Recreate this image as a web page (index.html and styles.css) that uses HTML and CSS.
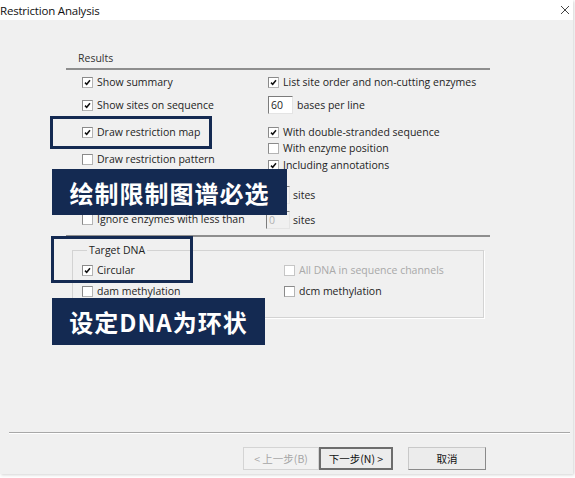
FILE: index.html
```html
<!DOCTYPE html>
<html lang="en">
<head>
    <meta charset="UTF-8">
    <meta name="viewport" content="width=device-width, initial-scale=1.0">
    <title>Restriction Analysis</title>
    <link rel="stylesheet" href="styles.css">
</head>
<body>
    <div class="window">
        <div class="titlebar">
            <span class="title">Restriction Analysis</span>
            <svg class="close" width="10" height="10" viewBox="0 0 10 10"><path d="M1 1 L9 9 M9 1 L1 9"/></svg>
        </div>

        <div class="content">
            <div class="results">
                <div class="section-head">Results</div>
                <div class="cols">
                    <div class="col col-left">
                        <label class="opt l1"><span class="cb on"><svg viewBox="0 0 9 9"><path d="M2 4.6 L3.7 6.3 L7 2.2"/></svg></span>Show summary</label>
                        <label class="opt l2"><span class="cb on"><svg viewBox="0 0 9 9"><path d="M2 4.6 L3.7 6.3 L7 2.2"/></svg></span>Show sites on sequence</label>
                        <label class="opt l3"><span class="cb on"><svg viewBox="0 0 9 9"><path d="M2 4.6 L3.7 6.3 L7 2.2"/></svg></span>Draw restriction map</label>
                        <label class="opt l4"><span class="cb"></span>Draw restriction pattern</label>
                        <div class="opt l5"><span class="cb"></span></div>
                        <label class="opt l6"><span class="cb"></span>Ignore enzymes with less than</label>
                    </div>
                    <div class="col col-right">
                        <label class="opt r1"><span class="cb on"><svg viewBox="0 0 9 9"><path d="M2 4.6 L3.7 6.3 L7 2.2"/></svg></span>List site order and non-cutting enzymes</label>
                        <div class="opt r2"><span class="num">60</span>bases per line</div>
                        <label class="opt r3"><span class="cb on"><svg viewBox="0 0 9 9"><path d="M2 4.6 L3.7 6.3 L7 2.2"/></svg></span>With double-stranded sequence</label>
                        <label class="opt r4"><span class="cb"></span>With enzyme position</label>
                        <label class="opt r5"><span class="cb on"><svg viewBox="0 0 9 9"><path d="M2 4.6 L3.7 6.3 L7 2.2"/></svg></span>Including annotations</label>
                        <div class="opt r6"><span class="num off">0</span>sites</div>
                        <div class="opt r7"><span class="num off">0</span>sites</div>
                    </div>
                </div>
            </div>

            <div class="rule"></div>

            <fieldset class="target">
                <legend>Target DNA</legend>
                <div class="target-grid">
                    <label class="opt"><span class="cb on"><svg viewBox="0 0 9 9"><path d="M2 4.6 L3.7 6.3 L7 2.2"/></svg></span>Circular</label>
                    <label class="opt disabled"><span class="cb"></span>All DNA in sequence channels</label>
                    <label class="opt"><span class="cb"></span>dam methylation</label>
                    <label class="opt"><span class="cb"></span>dcm methylation</label>
                </div>
            </fieldset>
        </div>

        <div class="footer">
            <div class="footer-sep"></div>
            <div class="buttons">
                <button class="btn btn-prev" disabled>&lt; 上一步(B)</button>
                <button class="btn btn-next">下一步(N) &gt;</button>
                <button class="btn btn-cancel">取消</button>
            </div>
        </div>

        <!-- annotation overlays -->
        <div class="mark mark-map"></div>
        <div class="label label-map">绘制限制图谱必选</div>
        <div class="mark mark-dna"></div>
        <div class="label label-dna">设定DNA为环状</div>
    </div>
</body>
</html>
```

FILE: styles.css
```css
* {
    margin: 0;
    padding: 0;
    box-sizing: border-box;
}

body {
    width: 575px;
    height: 478px;
    background: #fff;
    font-family: 'Open Sans', 'Noto Sans CJK SC', sans-serif;
    font-size: 10.5px;
    color: #1e1e1e;
    overflow: hidden;
}

.window {
    position: relative;
    width: 573px;
    height: 474px;
    background: #f0f0f0;
    display: flex;
    flex-direction: column;
    box-shadow: 1px 1px 3px rgba(0, 0, 0, 0.18);
}

.titlebar {
    height: 20px;
    background: #fff;
    display: flex;
    align-items: center;
    justify-content: space-between;
    padding-right: 3px;
}

.title {
    font-family: 'Open Sans', sans-serif;
    font-size: 11.5px;
    color: #111;
    letter-spacing: -0.2px;
}

.close path {
    stroke: #444;
    stroke-width: 1;
    fill: none;
}

.content {
    flex: 1;
    padding: 30px 0 0 66px;
}

.results {
    width: 424px;
}

.section-head {
    line-height: 16px;
    padding: 0 0 2px 12px;
    border-bottom: 2px solid #8e8e8e;
    color: #333;
}

.cols {
    display: flex;
    padding-left: 16px;
}

.col {
    display: flex;
    flex-direction: column;
    padding-top: 4px;
}

.col-left {
    width: 186px;
}

.opt {
    display: flex;
    align-items: center;
    height: 16px;
    white-space: nowrap;
}

.l2 { margin-top: 7px; }
.l3 { margin-top: 11px; }
.l4 { margin-top: 11px; }
.l5 { margin-top: 14px; }
.l6 { margin-top: 14px; }

.r2 { margin-top: 6px; height: 18px; }
.r3 { margin-top: 10px; }
.r4 { margin-top: 0; }
.r5 { margin-top: 1px; }
.r6 { margin-top: 13px; height: 18px; margin-left: -2px; }
.r7 { margin-top: 7px; height: 18px; margin-left: -2px; }

.cb {
    width: 11px;
    height: 11px;
    margin-right: 4px;
    border: 1px solid #8a8a8a;
    border-right-color: #b4b4b4;
    border-bottom-color: #b4b4b4;
    background: #fff;
    display: inline-flex;
    flex-shrink: 0;
}

.cb svg {
    width: 9px;
    height: 9px;
}

.cb svg path {
    stroke: #111;
    stroke-width: 1.5;
    fill: none;
}

.num {
    width: 25px;
    height: 18px;
    margin-right: 4px;
    padding-left: 2px;
    line-height: 16px;
    border: 1px solid #e4e4e4;
    border-left-color: #7c7c7c;
    border-top-color: #7c7c7c;
    background: #fff;
}

.num.off {
    width: 24px;
    margin-right: 3px;
    background: #f0f0f0;
    color: #b0b0b0;
}

.rule {
    width: 424px;
    margin-top: 6px;
    border-top: 2px solid #8e8e8e;
}

.target {
    width: 412px;
    margin: 6px 0 0 6px;
    padding: 0 0 18px 9px;
    border: 1px solid #d3d3d3;
    box-shadow: 1px 1px 0 #fff;
}

.target legend {
    margin-left: 5px;
    padding: 0 2px;
    line-height: 14px;
    color: #222;
}

.target-grid {
    display: grid;
    grid-template-columns: 202px 1fr;
    row-gap: 5px;
    padding-top: 5px;
}

.opt.disabled {
    color: #a9a9a9;
}

.opt.disabled .cb {
    border-color: #c6c6c6;
}

.footer {
    padding: 0 3px 4px 9px;
}

.footer-sep {
    border-top: 1px solid #a8a8a8;
    border-bottom: 1px solid #fff;
}

.buttons {
    display: flex;
    justify-content: flex-end;
    padding-right: 84px;
    margin-top: 13px;
}

.btn {
    height: 23px;
    font-family: 'Noto Sans CJK SC', sans-serif;
    font-size: 10.5px;
    color: #111;
    background: #ececec;
    border: 1px solid #c9c9c9;
    border-right-color: #8a8a8a;
    border-bottom-color: #8a8a8a;
}

.btn-prev {
    width: 76px;
    color: #a6a6a6;
    background: #f2f2f2;
    border-color: #d4d4d4;
}

.btn-next {
    width: 74px;
    border: 2px solid #6d6d6d;
}

.btn-cancel {
    width: 78px;
    margin-left: 15px;
}

/* annotation overlays */
.mark {
    position: absolute;
    border: 3px solid #142a52;
}

.mark-map {
    left: 50px;
    top: 116px;
    width: 162px;
    height: 33px;
}

.mark-dna {
    left: 51px;
    top: 236px;
    width: 142px;
    height: 47px;
}

.label {
    position: absolute;
    background: #142a52;
    color: #fff;
    font-family: 'Noto Sans CJK SC', sans-serif;
    font-weight: bold;
    display: flex;
    align-items: center;
    justify-content: center;
}

.label-map {
    left: 52px;
    top: 169px;
    width: 235px;
    height: 46px;
    font-size: 24px;
    letter-spacing: 1px;
}

.label-dna {
    left: 52px;
    top: 298px;
    width: 213px;
    height: 47px;
    font-size: 24px;
    letter-spacing: 1px;
}
```
